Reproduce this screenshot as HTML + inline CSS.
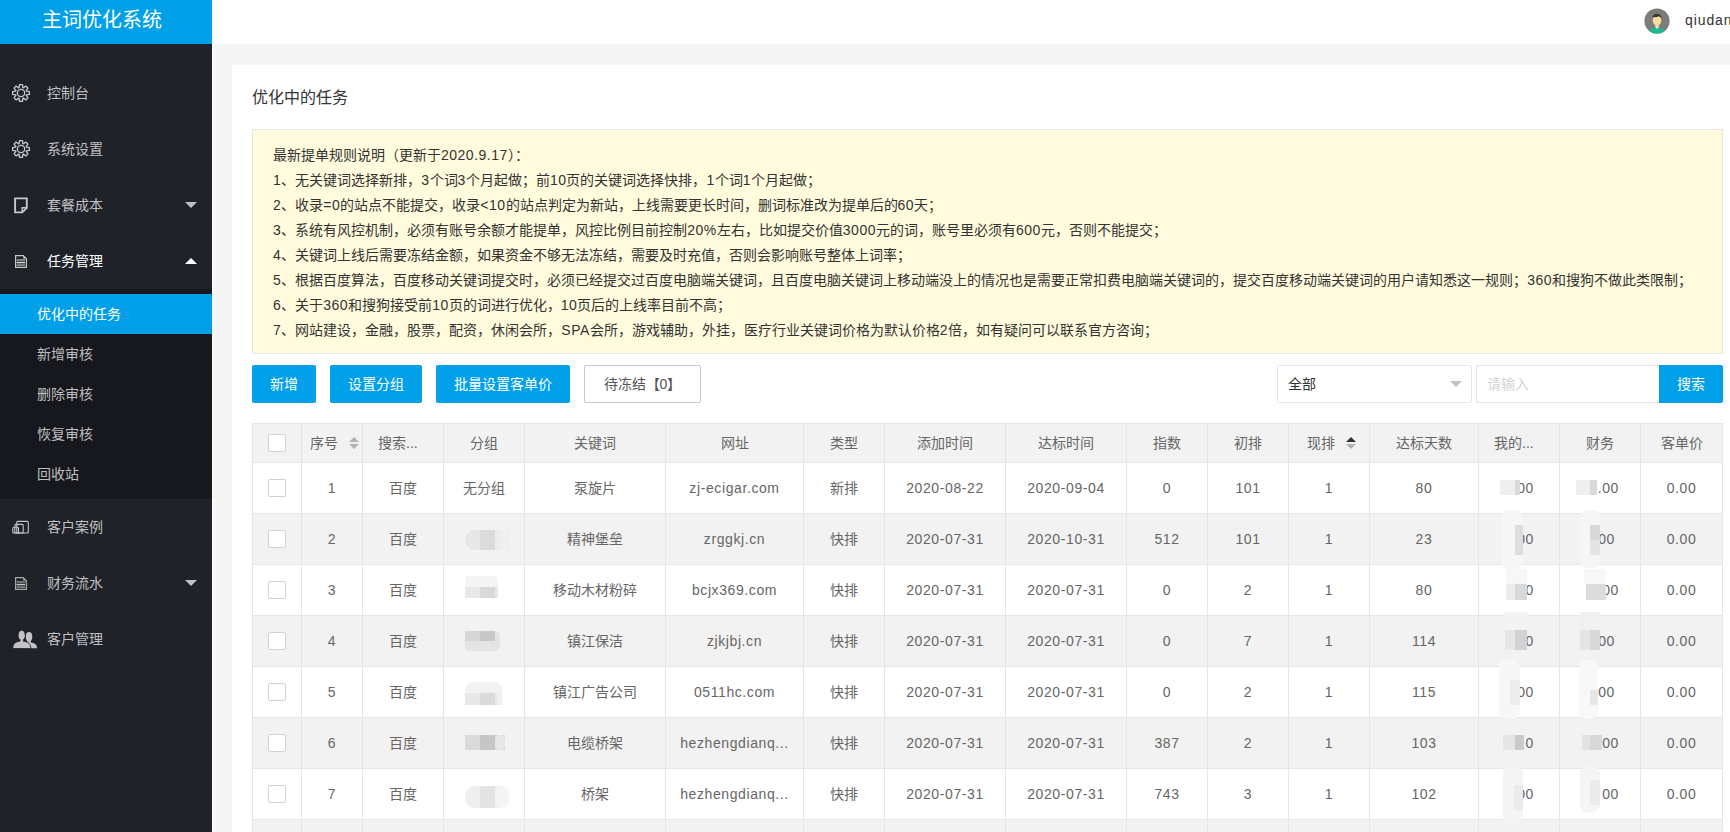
<!DOCTYPE html>
<html lang="zh-CN"><head><meta charset="utf-8">
<style>
*{box-sizing:border-box;margin:0;padding:0}
html,body{width:1730px;height:832px;overflow:hidden}
body{position:relative;background:#f5f5f5;font-family:"Liberation Sans",sans-serif;font-size:14px;color:#666}
.abs{position:absolute}
#side{left:0;top:0;width:212px;height:832px;background:#20222a}
#logo{left:0;top:0;width:212px;height:44px;background:#00a0e9;color:#fff;font-size:20px;line-height:40px;padding-left:42px;white-space:nowrap}
#hdr{left:212px;top:0;width:1518px;height:44px;background:#fff}
#vline{left:212px;top:44px;width:1px;height:788px;background:#fff}
.mi{left:0;width:212px;height:56px;line-height:56px;color:rgba(255,255,255,.72);padding-left:47px;white-space:nowrap}
.mi.on{color:#fff}
.ico{position:absolute}
.more{position:absolute;left:185px;width:0;height:0;border:6px solid transparent}
.more.dn{top:25px;border-top-color:rgba(255,255,255,.72);border-bottom:0}
.more.up{top:25px;border-bottom-color:#fff;border-top:0}
#sub{left:0;top:289px;width:212px;height:210px;background:#17181e}
.si{left:0;width:212px;height:40px;line-height:40px;padding-left:37px;color:rgba(255,255,255,.72);white-space:nowrap}
.si.on{background:#009fe8;color:#fff}
#card{left:232px;top:65px;width:1510px;height:800px;background:#fff}
#title{left:252px;top:86px;font-size:16px;line-height:24px;color:#333}
#note{left:252px;top:129px;width:1471px;height:225px;background:#fffbdc;border:1px solid #e6e6e6;padding:13px 0 0 20px;color:#333;line-height:25px;white-space:nowrap}
.btn{position:absolute;top:365px;height:38px;line-height:38px;background:#00a0e9;color:#fff;text-align:center;border-radius:2px;white-space:nowrap}
.btn.pri{background:#fff;border:1px solid #c9c9c9;color:#555;line-height:36px}
#sel{left:1277px;top:365px;width:195px;height:38px;border:1px solid #e6e6e6;border-radius:2px;line-height:36px;padding-left:10px;color:#333;background:#fff}
#sel i{position:absolute;left:172px;top:15px;border:6px solid transparent;border-top-color:#c2c2c2;border-bottom:0}
#inp{left:1476px;top:365px;width:184px;height:38px;border:1px solid #e6e6e6;border-right:0;border-radius:2px 0 0 2px;line-height:36px;padding-left:10px;color:#d4d4d4;background:#fff}
.row{position:absolute;left:252px;width:1471px;display:flex}
.c{flex:none;border-left:1px solid #e6e6e6;text-align:center;white-space:nowrap;overflow:hidden;position:relative}
.c:last-child{border-right:1px solid #e6e6e6}
.hd{top:423px;height:40px;background:#f2f2f2;border-top:1px solid #e6e6e6;border-bottom:1px solid #e6e6e6;line-height:38px}
.r{height:51px;line-height:50px;border-bottom:1px solid #e6e6e6}
.r.ev{background:#f2f2f2}
.cb{position:absolute;left:15px;width:18px;height:18px;border:1px solid #d2d2d2;border-radius:2px;background:#fff}
.hd .cb{top:10px}
.r .cb{top:16px}
.sort{position:absolute;top:13px;width:10px;height:12px}
.blob{position:absolute}
.ln{letter-spacing:.6px}
.ln5{letter-spacing:.5px}
</style></head><body>
<div id="side" class="abs"></div>
<div id="logo" class="abs">主词优化系统</div>
<div id="hdr" class="abs"></div>
<div id="vline" class="abs"></div>

<!-- header user -->
<svg class="abs" style="left:1644px;top:8px" width="26" height="26" viewBox="0 0 26 26">
<defs><clipPath id="cc"><circle cx="13" cy="13" r="12.6"/></clipPath></defs>
<circle cx="13" cy="13" r="12.6" fill="#7b7d79"/>
<g clip-path="url(#cc)">
<path d="M3 27 Q4 20 13 19.3 Q22 20 23 27Z" fill="#1db98c"/>
<path d="M10.6 18.2 L13 21 L15.4 18.2Z" fill="#f4f4f0"/>
<rect x="11.4" y="15" width="3.2" height="4" fill="#f1d394"/>
<path d="M8.6 11 Q8.6 17.6 13 17.6 Q17.4 17.6 17.4 11 Q17.4 8 13 8 Q8.6 8 8.6 11Z" fill="#f6dca2"/>
<path d="M8.5 11.8 Q8 5.6 13 5.8 Q18 5.6 17.5 11.8 Q16.8 8.6 14.8 8.2 Q12 9.6 9.6 9 Q8.8 10 8.5 11.8Z" fill="#3e3431"/>
</g></svg>
<div class="abs" style="left:1685px;top:10px;line-height:20px;font-size:14px;letter-spacing:.9px;color:#333;white-space:nowrap">qiudan</div>

<!-- menu -->
<svg class="abs" style="left:11px;top:83px" width="20" height="20" viewBox="0 0 20 20"><path d="M8.10 4.63 L8.56 1.62 L11.44 1.62 L11.90 4.63 L12.46 4.86 L14.91 3.06 L16.94 5.09 L15.14 7.54 L15.37 8.10 L18.38 8.56 L18.38 11.44 L15.37 11.90 L15.14 12.46 L16.94 14.91 L14.91 16.94 L12.46 15.14 L11.90 15.37 L11.44 18.38 L8.56 18.38 L8.10 15.37 L7.54 15.14 L5.09 16.94 L3.06 14.91 L4.86 12.46 L4.63 11.90 L1.62 11.44 L1.62 8.56 L4.63 8.10 L4.86 7.54 L3.06 5.09 L5.09 3.06 L7.54 4.86Z" fill="none" stroke="#c8c8ca" stroke-width="1.3" stroke-linejoin="round"/><circle cx="10" cy="10" r="3.7" fill="none" stroke="#c8c8ca" stroke-width="1.3"/></svg>
<svg class="abs" style="left:11px;top:139px" width="20" height="20" viewBox="0 0 20 20"><path d="M8.10 4.63 L8.56 1.62 L11.44 1.62 L11.90 4.63 L12.46 4.86 L14.91 3.06 L16.94 5.09 L15.14 7.54 L15.37 8.10 L18.38 8.56 L18.38 11.44 L15.37 11.90 L15.14 12.46 L16.94 14.91 L14.91 16.94 L12.46 15.14 L11.90 15.37 L11.44 18.38 L8.56 18.38 L8.10 15.37 L7.54 15.14 L5.09 16.94 L3.06 14.91 L4.86 12.46 L4.63 11.90 L1.62 11.44 L1.62 8.56 L4.63 8.10 L4.86 7.54 L3.06 5.09 L5.09 3.06 L7.54 4.86Z" fill="none" stroke="#c8c8ca" stroke-width="1.3" stroke-linejoin="round"/><circle cx="10" cy="10" r="3.7" fill="none" stroke="#c8c8ca" stroke-width="1.3"/></svg>
<svg class="abs" style="left:13px;top:196px" width="16" height="19" viewBox="0 0 16 19"><path d="M2.1 2.4H13.8V11.8L9.2 16.4H2.1Z" fill="none" stroke="#c8c8ca" stroke-width="1.9"/><path d="M9.2 16.2V11.8H13.6" fill="none" stroke="#c8c8ca" stroke-width="1.4"/></svg>
<svg class="abs" style="left:14px;top:254px" width="15" height="16" viewBox="0 0 15 16"><path d="M1.6 1.6H9.2L12.4 4.8V13.4H1.6Z" fill="none" stroke="#c8c8c8" stroke-width="1.2"/><path d="M9.2 1.6L12.4 4.8H9.2Z" fill="#c8c8c8" opacity=".8"/><rect x="2.6" y="5.2" width="8.4" height="1.6" fill="#999"/><rect x="2.6" y="7.8" width="8.4" height="1.5" fill="#ddd"/><rect x="2.6" y="10.3" width="8.4" height="1.6" fill="#999"/></svg>
<svg class="abs" style="left:14px;top:576px" width="15" height="16" viewBox="0 0 15 16"><path d="M1.6 1.6H9.2L12.4 4.8V13.4H1.6Z" fill="none" stroke="#a8a8a8" stroke-width="1.2"/><path d="M9.2 1.6L12.4 4.8H9.2Z" fill="#a8a8a8" opacity=".8"/><rect x="2.6" y="5.2" width="8.4" height="1.6" fill="#858585"/><rect x="2.6" y="7.8" width="8.4" height="1.5" fill="#c8c8c8"/><rect x="2.6" y="10.3" width="8.4" height="1.6" fill="#858585"/></svg>
<svg class="abs" style="left:11px;top:519px" width="20" height="16" viewBox="0 0 20 16"><g fill="none" stroke="#c4c4c6" stroke-width="1.1"><rect x="1.8" y="8.3" width="5.7" height="5.7" rx="1"/><rect x="3.8" y="5.4" width="8.4" height="8.6" rx="1"/><rect x="5.8" y="2.4" width="11.5" height="11.6" rx="1"/></g></svg>
<svg class="abs" style="left:12px;top:629px" width="26" height="21" viewBox="0 0 26 21"><g fill="#c4c4c6"><ellipse cx="17" cy="7.8" rx="3.3" ry="4.9"/><rect x="15.3" y="11" width="3.4" height="3"/><path d="M13 19.2 C13 15.5 14.5 13.6 17 13.3 C22 13.7 25 15.2 25 19.2Z"/></g><g fill="#c4c4c6" stroke="#20222a" stroke-width="0.9"><path d="M0.8 19.6 C0.8 15.2 3 13 6.8 12.4 L8 12.2 L8 10.8 C6.8 9.6 6.1 8.2 6.1 6.6 C6.1 3.4 7.6 1.2 9.7 1.2 C11.8 1.2 13.3 3.4 13.3 6.6 C13.3 8.2 12.6 9.6 11.4 10.8 L11.4 12.2 L12.6 12.4 C16.4 13 18.8 15.2 18.8 19.6Z"/></g></svg>

<div class="mi abs" style="top:65px">控制台</div>
<div class="mi abs" style="top:121px">系统设置</div>
<div class="mi abs" style="top:177px">套餐成本<i class="more dn"></i></div>
<div class="mi abs on" style="top:233px">任务管理<i class="more up"></i></div>
<div id="sub" class="abs"></div>
<div class="si abs on" style="top:294px">优化中的任务</div>
<div class="si abs" style="top:334px">新增审核</div>
<div class="si abs" style="top:374px">删除审核</div>
<div class="si abs" style="top:414px">恢复审核</div>
<div class="si abs" style="top:454px">回收站</div>
<div class="mi abs" style="top:499px">客户案例</div>
<div class="mi abs" style="top:555px">财务流水<i class="more dn"></i></div>
<div class="mi abs" style="top:611px">客户管理</div>

<!-- content -->
<div id="card" class="abs"></div>
<div id="title" class="abs">优化中的任务</div>
<div id="note" class="abs">最新提单规则说明（更新于<span class="ln5">2020.9.17</span>）：<br><span class="ln5">1</span>、无关键词选择新排，<span class="ln5">3</span>个词<span class="ln5">3</span>个月起做；前<span class="ln5">10</span>页的关键词选择快排，<span class="ln5">1</span>个词<span class="ln5">1</span>个月起做；<br><span class="ln5">2</span>、收录<span class="ln5">=0</span>的站点不能提交，收录<span class="ln5">&lt;10</span>的站点判定为新站，上线需要更长时间，删词标准改为提单后的<span class="ln5">60</span>天；<br><span class="ln5">3</span>、系统有风控机制，必须有账号余额才能提单，风控比例目前控制<span class="ln5">20%</span>左右，比如提交价值<span class="ln5">3000</span>元的词，账号里必须有<span class="ln5">600</span>元，否则不能提交；<br><span class="ln5">4</span>、关键词上线后需要冻结金额，如果资金不够无法冻结，需要及时充值，否则会影响账号整体上词率；<br><span class="ln5">5</span>、根据百度算法，百度移动关键词提交时，必须已经提交过百度电脑端关键词，且百度电脑关键词上移动端没上的情况也是需要正常扣费电脑端关键词的，提交百度移动端关键词的用户请知悉这一规则；<span class="ln5">360</span>和搜狗不做此类限制；<br><span class="ln5">6</span>、关于<span class="ln5">360</span>和搜狗接受前<span class="ln5">10</span>页的词进行优化，<span class="ln5">10</span>页后的上线率目前不高；<br><span class="ln5">7</span>、网站建设，金融，股票，配资，休闲会所，<span class="ln5">SPA</span>会所，游戏辅助，外挂，医疗行业关键词价格为默认价格<span class="ln5">2</span>倍，如有疑问可以联系官方咨询；</div>

<div class="btn" style="left:252px;width:64px">新增</div>
<div class="btn" style="left:330px;width:92px">设置分组</div>
<div class="btn" style="left:436px;width:134px">批量设置客单价</div>
<div class="btn pri" style="left:584px;width:117px">待冻结【0】</div>
<div id="sel" class="abs">全部<i></i></div>
<div id="inp" class="abs">请输入</div>
<div class="btn" style="left:1659px;width:64px;border-radius:0 2px 2px 0">搜索</div>

<div class="row hd"><div class="c" style="width:49px"><i class="cb"></i></div><div class="c" style="width:61px;text-align:left;padding-left:8px">序号<svg class="sort" style="left:47px" viewBox="0 0 10 12"><path d="M0 5L5 0L10 5Z M0 7L10 7L5 12Z" fill="#b2b2b2"/></svg></div><div class="c" style="width:81px;text-align:left;padding-left:15px">搜索...</div><div class="c" style="width:81px">分组</div><div class="c" style="width:141px">关键词</div><div class="c" style="width:138px">网址</div><div class="c" style="width:81px">类型</div><div class="c" style="width:121px">添加时间</div><div class="c" style="width:121px">达标时间</div><div class="c" style="width:81px">指数</div><div class="c" style="width:81px">初排</div><div class="c" style="width:81px"><span style="position:relative;left:-8px">现排</span><svg class="sort" style="left:57px" viewBox="0 0 10 12"><path d="M0 5L5 0L10 5Z" fill="#333"/><path d="M0 7L10 7L5 12Z" fill="#b2b2b2"/></svg></div><div class="c" style="width:109px">达标天数</div><div class="c" style="width:81px;text-align:left;padding-left:15px">我的...</div><div class="c" style="width:81px">财务</div><div class="c" style="width:83px">客单价</div></div>
<div class="row r" style="top:463px"><div class="c" style="width:49px"><i class="cb"></i></div><div class="c" style="width:61px"><span class="ln">1</span></div><div class="c" style="width:81px">百度</div><div class="c" style="width:81px">无分组</div><div class="c" style="width:141px">泵旋片</div><div class="c" style="width:138px"><span class="ln">zj-ecigar.com</span></div><div class="c" style="width:81px">新排</div><div class="c" style="width:121px"><span class="ln">2020-08-22</span></div><div class="c" style="width:121px"><span class="ln">2020-09-04</span></div><div class="c" style="width:81px"><span class="ln">0</span></div><div class="c" style="width:81px"><span class="ln">101</span></div><div class="c" style="width:81px"><span class="ln">1</span></div><div class="c" style="width:109px"><span class="ln">80</span></div><div class="c" style="width:81px;text-align:right;padding-right:25px"><span class="ln">00</span></div><div class="c" style="width:81px;text-align:right;padding-right:21px"><span class="ln">0.00</span></div><div class="c" style="width:83px"><span class="ln">0.00</span></div></div>
<div class="row r ev" style="top:514px"><div class="c" style="width:49px"><i class="cb"></i></div><div class="c" style="width:61px"><span class="ln">2</span></div><div class="c" style="width:81px">百度</div><div class="c" style="width:81px"></div><div class="c" style="width:141px">精神堡垒</div><div class="c" style="width:138px"><span class="ln">zrggkj.cn</span></div><div class="c" style="width:81px">快排</div><div class="c" style="width:121px"><span class="ln">2020-07-31</span></div><div class="c" style="width:121px"><span class="ln">2020-10-31</span></div><div class="c" style="width:81px"><span class="ln">512</span></div><div class="c" style="width:81px"><span class="ln">101</span></div><div class="c" style="width:81px"><span class="ln">1</span></div><div class="c" style="width:109px"><span class="ln">23</span></div><div class="c" style="width:81px;text-align:right;padding-right:25px"><span class="ln">00</span></div><div class="c" style="width:81px;text-align:right;padding-right:25px"><span class="ln">00</span></div><div class="c" style="width:83px"><span class="ln">0.00</span></div></div>
<div class="row r" style="top:565px"><div class="c" style="width:49px"><i class="cb"></i></div><div class="c" style="width:61px"><span class="ln">3</span></div><div class="c" style="width:81px">百度</div><div class="c" style="width:81px"></div><div class="c" style="width:141px">移动木材粉碎</div><div class="c" style="width:138px"><span class="ln">bcjx369.com</span></div><div class="c" style="width:81px">快排</div><div class="c" style="width:121px"><span class="ln">2020-07-31</span></div><div class="c" style="width:121px"><span class="ln">2020-07-31</span></div><div class="c" style="width:81px"><span class="ln">0</span></div><div class="c" style="width:81px"><span class="ln">2</span></div><div class="c" style="width:81px"><span class="ln">1</span></div><div class="c" style="width:109px"><span class="ln">80</span></div><div class="c" style="width:81px;text-align:right;padding-right:25px"><span class="ln">0</span></div><div class="c" style="width:81px;text-align:right;padding-right:21px"><span class="ln">00</span></div><div class="c" style="width:83px"><span class="ln">0.00</span></div></div>
<div class="row r ev" style="top:616px"><div class="c" style="width:49px"><i class="cb"></i></div><div class="c" style="width:61px"><span class="ln">4</span></div><div class="c" style="width:81px">百度</div><div class="c" style="width:81px"></div><div class="c" style="width:141px">镇江保洁</div><div class="c" style="width:138px"><span class="ln">zjkjbj.cn</span></div><div class="c" style="width:81px">快排</div><div class="c" style="width:121px"><span class="ln">2020-07-31</span></div><div class="c" style="width:121px"><span class="ln">2020-07-31</span></div><div class="c" style="width:81px"><span class="ln">0</span></div><div class="c" style="width:81px"><span class="ln">7</span></div><div class="c" style="width:81px"><span class="ln">1</span></div><div class="c" style="width:109px"><span class="ln">114</span></div><div class="c" style="width:81px;text-align:right;padding-right:25px"><span class="ln">0</span></div><div class="c" style="width:81px;text-align:right;padding-right:25px"><span class="ln">00</span></div><div class="c" style="width:83px"><span class="ln">0.00</span></div></div>
<div class="row r" style="top:667px"><div class="c" style="width:49px"><i class="cb"></i></div><div class="c" style="width:61px"><span class="ln">5</span></div><div class="c" style="width:81px">百度</div><div class="c" style="width:81px"></div><div class="c" style="width:141px">镇江广告公司</div><div class="c" style="width:138px"><span class="ln">0511hc.com</span></div><div class="c" style="width:81px">快排</div><div class="c" style="width:121px"><span class="ln">2020-07-31</span></div><div class="c" style="width:121px"><span class="ln">2020-07-31</span></div><div class="c" style="width:81px"><span class="ln">0</span></div><div class="c" style="width:81px"><span class="ln">2</span></div><div class="c" style="width:81px"><span class="ln">1</span></div><div class="c" style="width:109px"><span class="ln">115</span></div><div class="c" style="width:81px;text-align:right;padding-right:25px"><span class="ln">00</span></div><div class="c" style="width:81px;text-align:right;padding-right:25px"><span class="ln">00</span></div><div class="c" style="width:83px"><span class="ln">0.00</span></div></div>
<div class="row r ev" style="top:718px"><div class="c" style="width:49px"><i class="cb"></i></div><div class="c" style="width:61px"><span class="ln">6</span></div><div class="c" style="width:81px">百度</div><div class="c" style="width:81px"></div><div class="c" style="width:141px">电缆桥架</div><div class="c" style="width:138px"><span class="ln">hezhengdianq...</span></div><div class="c" style="width:81px">快排</div><div class="c" style="width:121px"><span class="ln">2020-07-31</span></div><div class="c" style="width:121px"><span class="ln">2020-07-31</span></div><div class="c" style="width:81px"><span class="ln">387</span></div><div class="c" style="width:81px"><span class="ln">2</span></div><div class="c" style="width:81px"><span class="ln">1</span></div><div class="c" style="width:109px"><span class="ln">103</span></div><div class="c" style="width:81px;text-align:right;padding-right:25px"><span class="ln">0</span></div><div class="c" style="width:81px;text-align:right;padding-right:21px"><span class="ln">00</span></div><div class="c" style="width:83px"><span class="ln">0.00</span></div></div>
<div class="row r" style="top:769px"><div class="c" style="width:49px"><i class="cb"></i></div><div class="c" style="width:61px"><span class="ln">7</span></div><div class="c" style="width:81px">百度</div><div class="c" style="width:81px"></div><div class="c" style="width:141px">桥架</div><div class="c" style="width:138px"><span class="ln">hezhengdianq...</span></div><div class="c" style="width:81px">快排</div><div class="c" style="width:121px"><span class="ln">2020-07-31</span></div><div class="c" style="width:121px"><span class="ln">2020-07-31</span></div><div class="c" style="width:81px"><span class="ln">743</span></div><div class="c" style="width:81px"><span class="ln">3</span></div><div class="c" style="width:81px"><span class="ln">1</span></div><div class="c" style="width:109px"><span class="ln">102</span></div><div class="c" style="width:81px;text-align:right;padding-right:25px"><span class="ln">00</span></div><div class="c" style="width:81px;text-align:right;padding-right:21px"><span class="ln">00</span></div><div class="c" style="width:83px"><span class="ln">0.00</span></div></div>
<div class="row r ev" style="top:820px"><div class="c" style="width:49px"><i class="cb"></i></div><div class="c" style="width:61px"></div><div class="c" style="width:81px"></div><div class="c" style="width:81px"></div><div class="c" style="width:141px"></div><div class="c" style="width:138px"></div><div class="c" style="width:81px"></div><div class="c" style="width:121px"></div><div class="c" style="width:121px"></div><div class="c" style="width:81px"></div><div class="c" style="width:81px"></div><div class="c" style="width:81px"></div><div class="c" style="width:109px"></div><div class="c" style="width:81px;text-align:right;padding-right:25px"></div><div class="c" style="width:81px;text-align:right;padding-right:21px"></div><div class="c" style="width:83px"></div></div>
<div class="blob" style="left:465px;top:530px;width:45px;height:20px;background:#e7e7e7;border-radius:10px"></div><div class="blob" style="left:480px;top:530px;width:15px;height:20px;background:#dbdbdb;border-radius:0px"></div><div class="blob" style="left:495px;top:530px;width:15px;height:20px;background:#ececec;border-radius:0px"></div><div class="blob" style="left:500px;top:530px;width:10px;height:20px;background:#efefef;border-radius:10px"></div><div class="blob" style="left:465px;top:576px;width:33px;height:22px;background:#f4f4f4;border-radius:4px"></div><div class="blob" style="left:465px;top:587px;width:33px;height:11px;background:#e8e8e8;border-radius:0px"></div><div class="blob" style="left:480px;top:587px;width:15px;height:11px;background:#d9d9d9;border-radius:0px"></div><div class="blob" style="left:465px;top:631px;width:35px;height:20px;background:#e4e4e4;border-radius:5px"></div><div class="blob" style="left:465px;top:631px;width:15px;height:10px;background:#d6d6d6;border-radius:0px"></div><div class="blob" style="left:480px;top:631px;width:15px;height:10px;background:#c8c8c8;border-radius:0px"></div><div class="blob" style="left:465px;top:682px;width:37px;height:23px;background:#f2f2f2;border-radius:8px"></div><div class="blob" style="left:465px;top:693px;width:37px;height:12px;background:#e8e8e8;border-radius:0px"></div><div class="blob" style="left:480px;top:693px;width:15px;height:12px;background:#dadada;border-radius:0px"></div><div class="blob" style="left:497px;top:693px;width:5px;height:12px;background:#efefef;border-radius:5px"></div><div class="blob" style="left:465px;top:735px;width:40px;height:15px;background:#dadada;border-radius:0px"></div><div class="blob" style="left:480px;top:735px;width:15px;height:15px;background:#c6c6c6;border-radius:0px"></div><div class="blob" style="left:495px;top:735px;width:10px;height:15px;background:#e6e7e8;border-radius:6px"></div><div class="blob" style="left:465px;top:786px;width:44px;height:22px;background:#efefef;border-radius:10px"></div><div class="blob" style="left:480px;top:786px;width:15px;height:22px;background:#e3e3e3;border-radius:0px"></div><div class="blob" style="left:495px;top:786px;width:14px;height:22px;background:#f4f5f7;border-radius:10px"></div><div class="blob" style="left:1500px;top:480px;width:20px;height:15px;background:#efefef;border-radius:0px"></div><div class="blob" style="left:1515px;top:480px;width:5px;height:15px;background:#d9d9d9;border-radius:0px"></div><div class="blob" style="left:1501px;top:510px;width:21px;height:59px;background:#f6f6f6;border-radius:6px"></div><div class="blob" style="left:1515px;top:525px;width:8px;height:30px;background:#dddddd;border-radius:0px"></div><div class="blob" style="left:1506px;top:569px;width:21px;height:15px;background:#f7f7f7;border-radius:0px"></div><div class="blob" style="left:1506px;top:584px;width:21px;height:16px;background:#ebebeb;border-radius:0px"></div><div class="blob" style="left:1515px;top:584px;width:12px;height:16px;background:#d8d8d8;border-radius:0px"></div><div class="blob" style="left:1505px;top:612px;width:22px;height:18px;background:#f3f3f3;border-radius:0px"></div><div class="blob" style="left:1505px;top:630px;width:22px;height:20px;background:#e6e6e6;border-radius:0px"></div><div class="blob" style="left:1515px;top:630px;width:12px;height:20px;background:#d2d2d2;border-radius:0px"></div><div class="blob" style="left:1499px;top:660px;width:21px;height:59px;background:#f7f7f7;border-radius:8px"></div><div class="blob" style="left:1510px;top:680px;width:10px;height:25px;background:#ececec;border-radius:0px"></div><div class="blob" style="left:1503px;top:735px;width:21px;height:15px;background:#e6e6e6;border-radius:0px"></div><div class="blob" style="left:1515px;top:735px;width:9px;height:15px;background:#cbcbcb;border-radius:0px"></div><div class="blob" style="left:1503px;top:765px;width:20px;height:60px;background:#f4f4f4;border-radius:9px"></div><div class="blob" style="left:1514px;top:785px;width:9px;height:25px;background:#ebebeb;border-radius:0px"></div><div class="blob" style="left:1576px;top:480px;width:21px;height:15px;background:#efefef;border-radius:0px"></div><div class="blob" style="left:1590px;top:480px;width:7px;height:15px;background:#d9d9d9;border-radius:0px"></div><div class="blob" style="left:1580px;top:510px;width:20px;height:58px;background:#f6f6f6;border-radius:6px"></div><div class="blob" style="left:1590px;top:525px;width:10px;height:15px;background:#d8d8d8;border-radius:0px"></div><div class="blob" style="left:1590px;top:540px;width:10px;height:15px;background:#e4e4e4;border-radius:0px"></div><div class="blob" style="left:1584px;top:569px;width:22px;height:15px;background:#f8f8f8;border-radius:0px"></div><div class="blob" style="left:1586px;top:584px;width:20px;height:16px;background:#dcdcdc;border-radius:0px"></div><div class="blob" style="left:1580px;top:612px;width:20px;height:18px;background:#f0f0f0;border-radius:0px"></div><div class="blob" style="left:1580px;top:630px;width:20px;height:20px;background:#e4e4e4;border-radius:0px"></div><div class="blob" style="left:1590px;top:630px;width:10px;height:20px;background:#d8d8d8;border-radius:0px"></div><div class="blob" style="left:1579px;top:660px;width:19px;height:59px;background:#f8f8f8;border-radius:8px"></div><div class="blob" style="left:1590px;top:690px;width:8px;height:15px;background:#e6e6e6;border-radius:0px"></div><div class="blob" style="left:1582px;top:735px;width:20px;height:15px;background:#e2e2e2;border-radius:0px"></div><div class="blob" style="left:1590px;top:735px;width:12px;height:15px;background:#d8d8d8;border-radius:0px"></div><div class="blob" style="left:1580px;top:765px;width:20px;height:48px;background:#f5f5f5;border-radius:9px"></div><div class="blob" style="left:1590px;top:780px;width:10px;height:25px;background:#ebebeb;border-radius:0px"></div>
</body></html>
